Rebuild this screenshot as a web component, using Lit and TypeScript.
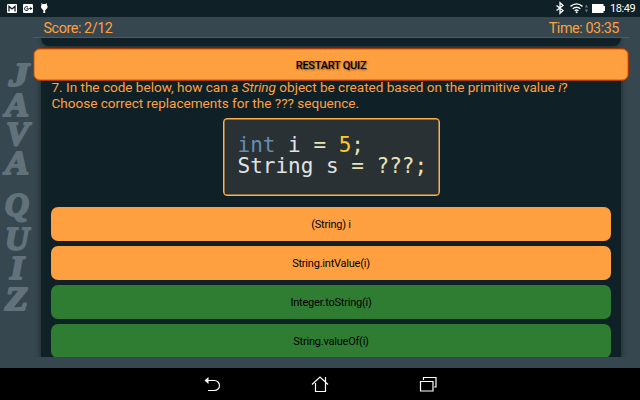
import { LitElement, html, css, svg } from "lit";
import { customElement } from "lit/decorators.js";

const LETTERS = [
  { ch: "J", x: 9, y: 27, w: 20 },
  { ch: "A", x: 5, y: 57, w: 24 },
  { ch: "V", x: 6, y: 86, w: 23 },
  { ch: "A", x: 5, y: 115, w: 24 },
  { ch: "Q", x: 5, y: 157, w: 24 },
  { ch: "U", x: 5, y: 191, w: 24 },
  { ch: "I", x: 10, y: 220, w: 14 },
  { ch: "Z", x: 5, y: 251, w: 23 },
];
const ANSWERS = [
  { text: "(String) i", correct: false },
  { text: "String.intValue(i)", correct: false },
  { text: "Integer.toString(i)", correct: true },
  { text: "String.valueOf(i)", correct: true },
];

@customElement("app-root")
export class AppRoot extends LitElement {
  static styles = css`
    :host {
      display: flex;
      flex-direction: column;
      width: 640px;
      height: 400px;
      overflow: hidden;
      background: #37474f;
      color: #ffa040;
      font-family: Roboto, sans-serif;
    }
    * { box-sizing: border-box; }
    svg { display: block; flex: none; }
    .status {
      height: 17px;
      flex: none;
      display: flex;
      align-items: center;
      justify-content: space-between;
      background: #102027;
      color: #fff;
    }
    .clock { font-size: 11px; letter-spacing: -0.4px; line-height: 18px; width: 30px; }
    .right { display: flex; }
    .main { display: flex; height: 351px; flex: none; }
    .side {
      width: 33px;
      flex: none;
      padding-top: 42px;
    }
    .side svg { overflow: visible; }
    .content {
      width: 596px;
      height: 340px;
      display: flex;
      flex-direction: column;
      position: relative;
    }
    .score {
      display: flex;
      justify-content: space-between;
      height: 21px;
      flex: none;
      padding: 0 10px 0 10.5px;
      font-size: 14.4px;
      letter-spacing: -0.45px;
      line-height: 24px;
      border-bottom: 1px solid #87491f;
    }
    .scroll { height: 319px; overflow: hidden; padding: 0 8px; }
    .previous {
      height: 8px;
      border-radius: 0 0 8px 8px;
      background: #102027;
      box-shadow: 0 1px 5px #0006;
    }
    .card {
      height: 330px;
      margin-top: 6px;
      padding: 27px 10px 0;
      border-radius: 8px;
      background: #102027;
      box-shadow: 0 1px 6px #0007;
    }
    .restart {
      position: absolute;
      top: 31px;
      left: 0;
      width: 596px;
      height: 33px;
      border: 1px solid #a83a00;
      box-shadow: inset 0 0 0 0.5px #c85a10;
      border-radius: 7px;
      background: #ffa040;
      color: #000;
      font: 500 11px/32px Roboto, sans-serif;
      letter-spacing: -0.25px;
      text-align: center;
      text-shadow: 1px 1px 2px #0008;
      padding: 1px 0 0;
    }
    .question { font-size: 13.6px; letter-spacing: -0.03px; line-height: 16px; padding-left: 0.5px; white-space: nowrap; }
    .code {
      width: 217px;
      height: 78px;
      margin: 7px auto 11px;
      padding: 16px 0 0 14px;
      border: 1px solid #ffb04a;
      box-shadow: inset 0 0 0 0.5px #ffb04a;
      border-radius: 4px;
      background: #293134;
      color: #e0e2e4;
      font: 21px/21px "DejaVu Sans Mono", monospace;
      white-space: pre;
    }
    .kw { color: #678cb1; }
    .num { color: #ffcd22; }
    .op { color: #e8e2b7; }
    .answers { display: grid; gap: 5px; }
    .answer {
      height: 34px;
      border: 0;
      padding: 2px 0 0;
      border-radius: 7px;
      background: #ffa040;
      color: #000;
      font: 11px/32px Roboto, sans-serif;
      letter-spacing: -0.22px;
    }
    .answer.correct { background: #2e7d32; }
    .nav {
      height: 32px;
      flex: none;
      background: #000;
      display: flex;
      justify-content: center;
    }
  `;

  render() {
    return html`
      <div class="status">
        <svg width="60" height="17" viewBox="0 0 60 17">
          <rect x="7" y="4" width="10" height="9" rx="1" fill="#fff"/>
          <path d="M9 11.500V6.500l3 2.500 3-2.500v5" fill="none" stroke="#102027" stroke-width="1.300"/>
          <rect x="23" y="4" width="10" height="9" rx="1" fill="#fff"/>
          <path d="M28 7.200a2 2 0 1 0 .3 2.300V8.700h-1.800M29.300 8.500h2.800M30.700 7.100v2.800" fill="none" stroke="#102027"/>
          <path d="M41 3l1.500 1h3.200L47 3l-.2 1.700q2 2.300-.8 4.800l-.8.700V13h-1.900v-2.800l-.8-.7q-2.600-2.500-.9-4.800z" fill="#fff"/>
        </svg>
        <div class="right">
          <svg width="60" height="17" viewBox="550 0 60 17">
            <path d="M556.500 5.500l6.500 5-3 2.700V2.800l3 2.700-6.500 5" fill="none" stroke="#fff" stroke-width="1.300"/>
            <path d="M570.500 6.400q6-5 12 0M572.700 8.700q3.900-3 7.700 0M574.700 10.800q1.900-1.500 3.800 0" fill="none" stroke="#fff" stroke-width="1.400"/>
            <circle cx="576.600" cy="12.200" r="1" fill="#fff"/>
            <path d="M584.800 7.500l1.700-3 1.700 3zM584.800 9.500l1.700 3 1.700-3z" fill="#62727b"/>
            <path d="M592 4h11.500v2h1.500v5h-1.500v2H592z" fill="#fff"/>
          </svg>
          <span class="clock">18:49</span>
        </div>
      </div>
      <div class="main">
        <div class="side">
          <svg width="33" height="280" viewBox="0 0 33 280" font-family="Liberation Serif" font-weight="bold" font-style="italic" font-size="33" fill="#62727b" stroke="#62727b" stroke-width="2" stroke-linejoin="round">
            ${LETTERS.map((l) => svg`<text x=${l.x} y=${l.y} textLength=${l.w} lengthAdjust="spacingAndGlyphs">${l.ch}</text>`)}
          </svg>
        </div>
        <div class="content">
          <div class="score"><span>Score: 2/12</span><span>Time: 03:35</span></div>
          <div class="scroll">
            <div class="previous"></div>
            <div class="card">
              <div class="question">7. In the code below, how can a <i>String</i> object be created based on the primitive value <i>i</i>?<br>Choose correct replacements for the ??? sequence.</div>
              <div class="code"><span class="kw">int</span> i <span class="op">=</span> <span class="num">5</span><span class="op">;</span>
String s <span class="op">= ???;</span></div>
              <div class="answers">
                ${ANSWERS.map((a) => html`<button class="answer ${a.correct ? "correct" : ""}">${a.text}</button>`)}
              </div>
            </div>
          </div>
          <button class="restart">RESTART QUIZ</button>
        </div>
      </div>
      <div class="nav">
        <svg width="260" height="32" viewBox="190 368 260 32" fill="none" stroke="#fff" stroke-width="1.200">
          <path d="M207 380.500h7.500a4.800 4.800 0 0 1 0 10H208"/>
          <path d="M204.500 380.500l4-3.500v7z" fill="#fff" stroke="none"/>
          <path d="M312 384.500l8-7.500 8 7.500M325.500 382V377M315.500 383v8.500h10V383"/>
          <path d="M420.500 381.500h12.500v9.500h-12.500zM423.500 380v-2.500h12.500v9.500h-1.800"/>
        </svg>
      </div>
    `;
  }
}
